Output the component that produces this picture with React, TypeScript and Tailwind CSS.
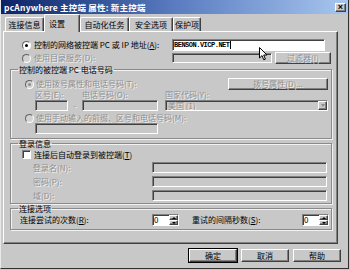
import type { ReactNode } from 'react';

const font = "font-['Noto_Sans_CJK_SC','Liberation_Sans',sans-serif]";
const dim = 'text-[#8e8e8e] [text-shadow:1px_1px_0_#f4f4f4]';
const sunken =
  'border border-t-[#808080] border-l-[#808080] border-r-white border-b-white shadow-[inset_1px_1px_0_#404040]';
const raised =
  'border border-t-white border-l-white border-r-[#404040] border-b-[#404040] shadow-[inset_-1px_-1px_0_#808080]';

function Radio({ checked = false, disabled = false }: { checked?: boolean; disabled?: boolean }) {
  return (
    <span
      className={`w-[9px] h-[9px] rounded-full shrink-0 flex items-center justify-center border border-t-[#606060] border-l-[#606060] border-r-white border-b-white ${
        disabled ? 'bg-[#d2d2d2]' : 'bg-white'
      }`}
    >
      {checked && <span className={`w-[3px] h-[3px] rounded-full ${disabled ? 'bg-[#8e8e8e]' : 'bg-black'}`} />}
    </span>
  );
}

function Field({ w, h = 11, disabled = true, children }: { w: string; h?: number; disabled?: boolean; children?: ReactNode }) {
  return (
    <div
      className={`${w} ${h === 12 ? 'h-[12px]' : h === 10 ? 'h-[10px]' : 'h-[11px]'} ${sunken} ${
        disabled ? 'bg-[#c8c8c8]' : 'bg-white'
      } shrink-0 flex items-center overflow-hidden`}
    >
      {children}
    </div>
  );
}

function Btn({ w, children, disabled = false, def = false }: { w: string; children: ReactNode; disabled?: boolean; def?: boolean }) {
  return (
    <div
      className={`${w} h-full shrink-0 flex items-center justify-center ${
        def ? 'outline outline-1 outline-black' : ''
      } ${raised} ${disabled ? dim : 'text-black'}`}
    >
      {children}
    </div>
  );
}

function Spin() {
  return (
    <div className={`w-[27px] h-[12px] ${sunken} bg-white flex shrink-0`}>
      <span className="flex-1 pl-[1px] leading-[10px] text-black">0</span>
      <div className="w-[9px] flex flex-col bg-[#c8c8c8]">
        <div className={`flex-1 ${raised} flex items-center justify-center`}>
          <span className="w-0 h-0 border-x-[2px] border-x-transparent border-b-[2px] border-b-black" />
        </div>
        <div className={`flex-1 ${raised} flex items-center justify-center`}>
          <span className="w-0 h-0 border-x-[2px] border-x-transparent border-t-[2px] border-t-black" />
        </div>
      </div>
    </div>
  );
}

function Group({ label, children, className }: { label: string; children: ReactNode; className: string }) {
  return (
    <fieldset className={`border border-[#8a8a8a] shadow-[1px_1px_0_#f2f2f2,inset_1px_1px_0_#f2f2f2] ${className}`}>
      <legend className="ml-[7px] px-[1px] h-[9px] leading-[9px] text-black">{label}</legend>
      {children}
    </fieldset>
  );
}

const tabs = [
  { t: '连接信息', w: 'w-[39px]' },
  { t: '设置', w: 'w-[36px]', on: true },
  { t: '自动化任务', w: 'w-[49px]' },
  { t: '安全选项', w: 'w-[44px]' },
  { t: '保护项', w: 'w-[28px]' },
];

export default function App() {
  return (
    <div className={`w-[350px] h-[270px] bg-[#c8c8c8] overflow-hidden text-[8px] leading-none ${font}`}>
      <div className="relative w-[349px] h-[269px] flex flex-col border-l border-l-[#e8e8e8] border-r border-b border-r-[#303030] border-b-[#303030]">
        {/* title bar */}
        <div className="h-[14px] flex items-center bg-linear-to-r from-[#0c2266] via-[#5a7cc0] to-[#a8c6ee] pl-[3px] pr-[2px] shrink-0">
          <span className="text-white font-bold text-[8.5px] tracking-[0.2px]">pcAnywhere 主控端 属性: 新主控端</span>
          <div className={`ml-auto w-[11px] h-[9px] bg-[#c8c8c8] ${raised} flex items-center justify-center`}>
            <span className="text-[9px] leading-none font-bold text-black font-['Liberation_Sans',sans-serif]">×</span>
          </div>
        </div>

        {/* tabs */}
        <div className="h-[17px] flex items-end pl-[4px] shrink-0">
          {tabs.map((tab) => (
            <div
              key={tab.t}
              className={`${tab.w} flex items-center border-t border-l border-t-white border-l-white border-r border-r-[#404040] shadow-[inset_-1px_0_0_#808080] rounded-t-[2px] text-black ${
                tab.on ? 'h-[18px] -mb-px relative z-10 bg-[#c8c8c8] pl-[4px]' : 'h-[14px] justify-center'
              }`}
            >
              {tab.t}
            </div>
          ))}
        </div>

        {/* panel */}
        <div className="ml-[2px] w-[335px] h-[213px] shrink-0 flex flex-col border border-t-white border-l-white border-r-[#404040] border-b-[#404040] shadow-[inset_-1px_-1px_0_#808080]">
          <div className="mt-[7px] h-[12px] flex items-center">
            <span className="ml-[18px]"><Radio checked /></span>
            <span className="ml-[3px] w-[138px] text-black">控制的网络被控端 PC 或 IP 地址(<u>A</u>):</span>
            <Field w="w-[153px]" h={12} disabled={false}>
              <span className="pl-[1px] text-[7px] tracking-[-0.5px] font-bold font-['Liberation_Mono',monospace] text-black">BENSON.VICP.NET</span>
              <span className="w-px h-[8px] bg-black" />
            </Field>
          </div>
          <div className="mt-[1px] h-[12px] flex items-center">
            <span className="ml-[18px]"><Radio disabled /></span>
            <span className={`ml-[3px] w-[138px] ${dim}`}>使用目录服务(D):</span>
            <Field w="w-[100px]" h={10} />
            <div className="ml-[3px] h-[12px] flex">
              <Btn w="w-[56px]" disabled>过滤器(I)</Btn>
            </div>
          </div>

          <Group label="控制的被控端 PC 电话号码" className="ml-[6px] w-[322px] mt-[1px] pb-[4px]">
            <div className="mt-[4px] h-[12px] flex items-center">
              <span className="ml-[14px]"><Radio disabled checked /></span>
              <span className={`ml-[2px] w-[192px] ${dim}`}>使用拨号属性和电话号码(T):</span>
              <div className="h-[12px] flex">
                <Btn w="w-[100px]" disabled>拨号属性(D)...</Btn>
              </div>
            </div>
            <div className={`h-[10px] flex items-end pb-[1px] ${dim}`}>
              <span className="ml-[24px] w-[47px]">区号(E):</span>
              <span className="w-[83px]">电话号码(O):</span>
              <span>国家代码(Y):</span>
            </div>
            <div className="h-[11px] flex items-center">
              <span className="ml-[24px]"><Field w="w-[33px]" /></span>
              <span className={`w-[14px] text-center ${dim}`}>-</span>
              <Field w="w-[76px]" />
              <span className="ml-[7px]">
                <Field w="w-[163px]">
                  <span className={`pl-[2px] flex-1 ${dim}`}>美国 (1)</span>
                  <div className={`w-[9px] h-full bg-[#c8c8c8] ${raised} flex items-center justify-center`}>
                    <span className="w-0 h-0 border-x-[2.5px] border-x-transparent border-t-[3px] border-t-[#8e8e8e]" />
                  </div>
                </Field>
              </span>
            </div>
            <div className="mt-[2px] h-[10px] flex items-center">
              <span className="ml-[14px]"><Radio disabled /></span>
              <span className={`ml-[2px] ${dim}`}>使用手动输入的前缀、区号和电话号码(M):</span>
            </div>
            <div className="h-[11px] flex items-center">
              <span className="ml-[24px]"><Field w="w-[123px]" /></span>
            </div>
          </Group>

          <Group label="登录信息" className="ml-[6px] w-[322px] mt-0 pb-[2px]">
            <div className="mt-[2px] h-[9px] flex items-center">
              <span className={`ml-[11px] w-[9px] h-[9px] bg-white ${sunken}`} />
              <span className="ml-[3px] text-black">连接后自动登录到被控端(<u>T</u>)</span>
            </div>
            {['登录名(N):', '密码(P):', '域(D):'].map((l) => (
              <div key={l} className="mt-[3px] h-[11px] flex items-center">
                <span className={`ml-[22px] w-[119px] ${dim}`}>{l}</span>
                <Field w="w-[175px]" />
              </div>
            ))}
          </Group>

          <Group label="连接选项" className="ml-[6px] w-[322px] mt-0 pb-[3px]">
            <div className="mt-px h-[12px] flex items-center text-black">
              <span className="ml-[9px] w-[132px]">连接尝试的次数(<u>R</u>):</span>
              <Spin />
              <span className="ml-[13px] w-[110px]">重试的间隔秒数(<u>S</u>):</span>
              <Spin />
            </div>
          </Group>
        </div>

        {/* dialog buttons */}
        <div className="mt-[5px] h-[13px] flex justify-end gap-[4px] pr-[7px]">
          <Btn w="w-[48px]" def>确定</Btn>
          <Btn w="w-[48px]">取消</Btn>
          <Btn w="w-[48px]">帮助</Btn>
        </div>

        {/* mouse pointer */}
        <svg className="absolute left-[258px] top-[47px]" width="9" height="14" viewBox="0 0 9 14">
          <path d="M0.5 0.5 L0.5 11 L3 8.6 L4.8 12.8 L6.4 12.1 L4.7 8 L8 8 Z" fill="white" stroke="black" strokeWidth="1" />
        </svg>
      </div>
    </div>
  );
}
